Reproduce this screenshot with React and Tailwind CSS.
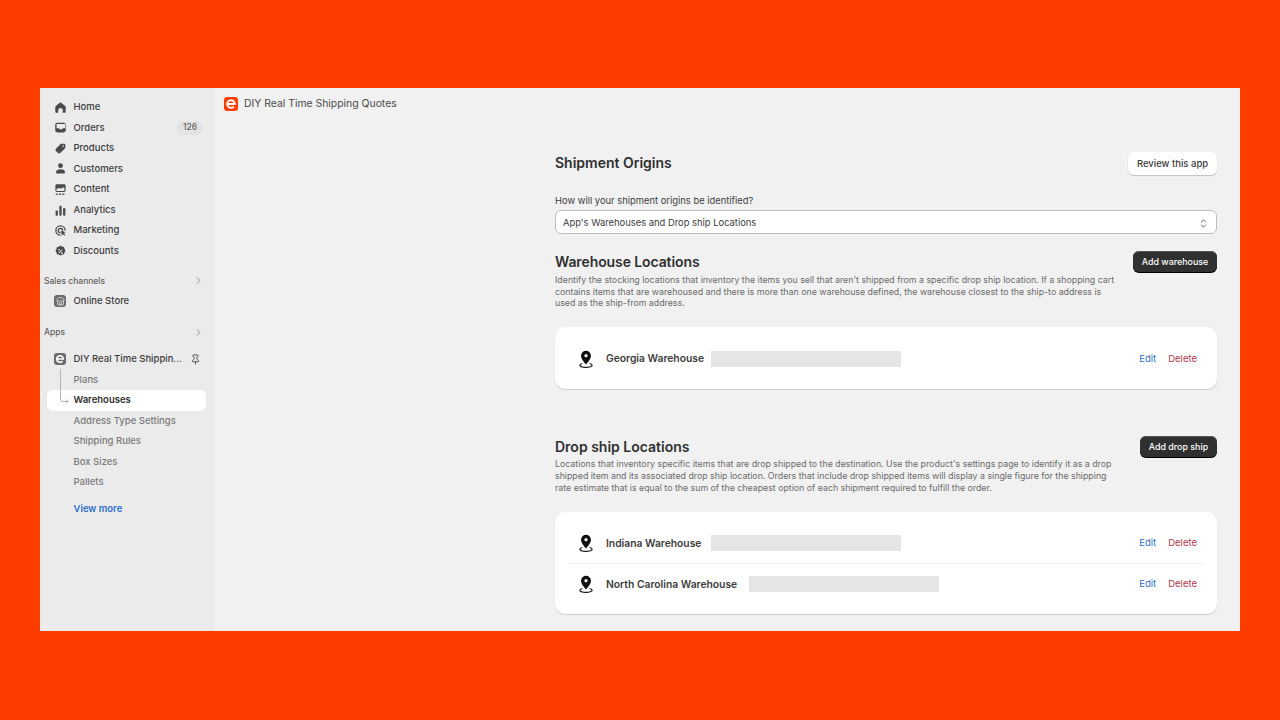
import { Store, Pin, ChevronRight, ChevronsUpDown } from "lucide-react";

const navItems = [
  { label: "Home", icon: <path d="M8 1.5 2.2 6.2c-.4.3-.6.7-.6 1.2v5.800c0 .8.6 1.300 1.300 1.300h2.300v-3.200c0-1.400 1.200-2.600 2.800-2.600s2.800 1.200 2.800 2.600v3.200h2.300c.7 0 1.300-.5 1.300-1.300V7.400c0-.5-.2-.9-.6-1.200L8 1.500Z" /> },
  { label: "Orders", badge: "126", icon: <path fillRule="evenodd" d="M4 2h8c1.4 0 2.5 1.100 2.5 2.500v7c0 1.400-1.100 2.500-2.500 2.500H4c-1.400 0-2.500-1.100-2.500-2.500v-7C1.500 3.100 2.600 2 4 2Zm-.8 1.800v5.200h2.300c.5 0 .8.2 1 .6l.3.6h3.400l.3-.6c.2-.4.5-.6 1-.6h2.300V3.800H3.200Z" /> },
  { label: "Products", icon: <path fillRule="evenodd" d="M9.500 2H13c.6 0 1 .4 1 1v3.500c0 .5-.2 1-.6 1.400l-5.700 5.700c-.8.8-2 .8-2.800 0L2.400 11.100c-.8-.8-.8-2 0-2.800L8.100 2.600C8.500 2.200 9 2 9.500 2Zm1.700 2a1 1 0 1 0 0 2 1 1 0 0 0 0-2Z" /> },
  { label: "Customers", icon: <><circle cx="8" cy="4.500" r="3" /><path d="M2.500 12.500c0-2.200 2-3.700 5.500-3.700s5.500 1.500 5.500 3.700c0 1-.7 1.500-1.500 1.500H4c-.8 0-1.500-.5-1.500-1.500Z" /></> },
  { label: "Content", icon: <><path fillRule="evenodd" d="M3.500 1.500h9c1 0 1.800.8 1.800 1.800v6c0 1-.8 1.800-1.800 1.800h-9c-1 0-1.800-.8-1.800-1.800v-6c0-1 .8-1.800 1.800-1.800Zm-.4 5.700v2.100c0 .3.2.5.4.5h9c.2 0 .4-.2.4-.5V6.600l-2-1.400-2.200 1.900-1.700-1-3.900 1.100Z" /><rect x="2" y="13" width="3" height="1.500" rx=".5" /><rect x="6" y="13" width="3" height="1.500" rx=".5" /><rect x="10" y="13" width="3" height="1.500" rx=".5" /></> },
  { label: "Analytics", icon: <><rect x="2" y="8" width="2.800" height="6.500" rx="1" /><rect x="6.600" y="2" width="2.800" height="12.500" rx="1" /><rect x="11.200" y="5" width="2.800" height="9.500" rx="1" /></> },
  { label: "Marketing", icon: <path fillRule="evenodd" d="M8 1.500a6.500 6.500 0 0 1 6.500 6.500h-1.600A4.900 4.900 0 1 0 8 12.900v1.600A6.500 6.500 0 0 1 8 1.500Zm0 3A3.500 3.500 0 0 1 11.500 8H9.900A1.900 1.900 0 1 0 8 9.900v1.600a3.500 3.500 0 0 1 0-7Zm.5 3.500 6 2-2.500 1 2 2.200-1.100 1.100-2.100-2.100-1 2.500-1.300-6.700Z" /> },
  { label: "Discounts", icon: <path fillRule="evenodd" d="M6.700 1.400a1.800 1.800 0 0 1 2.600 0l.7.7 1-.1c1 0 1.900.8 1.900 1.900l-.1 1 .7.7c.7.7.7 1.900 0 2.600l-.7.7.1 1c0 1-.8 1.900-1.900 1.900l-1-.1-.7.7c-.7.7-1.900.7-2.600 0l-.7-.7-1 .1c-1 0-1.900-.8-1.900-1.900l.1-1-.7-.7a1.800 1.800 0 0 1 0-2.600l.7-.7-.1-1c0-1 .8-1.900 1.900-1.900l1 .1.7-.7ZM9.700 5.400 5.500 9.600l.9.900 4.200-4.200-.9-.9ZM6.300 5a1 1 0 1 0 0 2 1 1 0 0 0 0-2Zm3.400 4a1 1 0 1 0 0 2 1 1 0 0 0 0-2Z" /> },
];

const subItems = ["Plans", "Warehouses", "Address Type Settings", "Shipping Rules", "Box Sizes", "Pallets"];

function NavIcon({ children }) {
  return (
    <svg viewBox="0 0 16 16" className="h-[13px] w-[13px] shrink-0 fill-[#4a4a4a]">
      {children}
    </svg>
  );
}

// the app's "e" mark, used in the sidebar and the title bar
function AppLogo({ className }) {
  return (
    <span className={`flex items-center justify-center ${className}`}>
      <svg viewBox="0 0 14 14" className="h-full w-full">
        <path d="M3.200 7h7.600A3.800 3.800 0 1 0 9.800 9.600" fill="none" stroke="#fff" strokeWidth="2" />
      </svg>
    </span>
  );
}

function LocationPin() {
  return (
    <svg viewBox="0 0 16 20" className="h-[19px] w-[16px] shrink-0">
      <path fillRule="evenodd" fill="#111" d="M8 .8a5.200 5.200 0 0 0-5.200 5.200c0 3.300 3.200 6.900 5.200 9.200 2-2.300 5.200-5.900 5.200-9.200A5.200 5.200 0 0 0 8 .8Zm0 3.500a1.700 1.700 0 1 1 0 3.400 1.700 1.700 0 0 1 0-3.400Z" />
      <path fill="none" stroke="#111" strokeWidth="1.300" d="M4.200 14.200c-1.600.4-2.600 1-2.600 1.900 0 1.200 2.900 2.200 6.400 2.200s6.400-1 6.400-2.200c0-.9-1-1.500-2.600-1.900" />
    </svg>
  );
}

function LocationRow({ name, nameWidth }) {
  return (
    <div className="flex h-[40px] items-center pr-[20px] pl-[23px]">
      <LocationPin />
      <span className={`ml-[12px] shrink-0 text-[10.300px] font-semibold text-[#3d3d3d] ${nameWidth}`}>{name}</span>
      <div className="h-[16px] w-[190px] bg-[#e5e5e5]" />
      <a className="ml-auto text-[9.500px] text-[#2c6ecb]">Edit</a>
      <a className="ml-[12px] text-[9.500px] text-[#b0384f]">Delete</a>
    </div>
  );
}

function DarkButton({ children, width }) {
  return (
    <button className={`flex h-[21px] ${width} shrink-0 items-center justify-center rounded-[6px] bg-[#303030] text-[8.900px] font-medium text-white shadow-[0_1px_0_#000,inset_0_1px_0_#555]`}>
      {children}
    </button>
  );
}

export default function App() {
  return (
    <div className="flex h-[720px] flex-col bg-[#ff3c00] px-[40px] pt-[88px] pb-[89px] font-['Inter',sans-serif]">
      <div className="flex h-[543px] overflow-hidden bg-[#f1f1f1]">
        {/* SIDEBAR */}
        <aside className="flex w-[174px] shrink-0 flex-col bg-[#ebebeb] pt-[9px] pr-[8px] pl-[7px]">
          {navItems.map((item) => (
            <div key={item.label} className="flex h-[20.560px] items-center pr-[3px] pl-[7px]">
              <NavIcon>{item.icon}</NavIcon>
              <span className="ml-[6.500px] text-[9.500px] font-medium text-[#3d3d3d]">{item.label}</span>
              {item.badge && (
                <span className="ml-auto flex h-[14px] w-[26px] items-center justify-center rounded-[7px] bg-[#e3e3e3] text-[8.500px] font-medium text-[#616161]">
                  {item.badge}
                </span>
              )}
            </div>
          ))}

          <div className="mt-[9.500px] flex h-[20px] items-center justify-between pr-[2px]">
            <span className="-ml-[3px] text-[8.500px] font-medium text-[#616161]">Sales channels</span>
            <ChevronRight size={11} className="text-[#8a8a8a]" />
          </div>
          <div className="flex h-[20.560px] items-center pl-[7px]">
            <span className="flex h-[12px] w-[12px] items-center justify-center rounded-[3px] bg-[#6b6b6b]">
              <Store size={9} className="text-[#ebebeb]" />
            </span>
            <span className="ml-[7.500px] text-[9.500px] font-medium text-[#3d3d3d]">Online Store</span>
          </div>

          <div className="mt-[11px] flex h-[20px] items-center justify-between pr-[2px]">
            <span className="-ml-[3px] text-[8.500px] font-medium text-[#616161]">Apps</span>
            <ChevronRight size={11} className="text-[#8a8a8a]" />
          </div>
          <div className="mt-[6.500px] flex h-[20.560px] items-center pr-[5px] pl-[7px]">
            <AppLogo className="h-[12px] w-[12px] rounded-[3px] bg-[#6b6b6b]" />
            <span className="ml-[7.500px] text-[9.500px] font-medium whitespace-nowrap text-[#3d3d3d]">DIY Real Time Shippin...</span>
            <Pin size={11} className="ml-auto text-[#4a4a4a]" />
          </div>

          <div className="relative">
            {/* tree connector */}
            <svg viewBox="0 0 12 36" className="absolute top-0 left-[12px] z-10 h-[36px] w-[12px]">
              <path d="M1.500 0V30q0 2.500 2.500 2.500H9M7 30.500l2 2-2 2" fill="none" stroke="#b5b5b5" />
            </svg>
            {subItems.map((label) => (
              <div
                key={label}
                className={`flex h-[20.560px] items-center rounded-[6px] pl-[26.500px] text-[9.500px] font-medium ${
                  label === "Warehouses" ? "bg-white font-semibold text-[#303030]" : "text-[#7a7a7a]"
                }`}
              >
                {label}
              </div>
            ))}
          </div>

          <div className="mt-[6.500px] flex h-[20.560px] items-center pl-[26.500px] text-[9.500px] font-semibold text-[#2c6ecb]">View more</div>
        </aside>

        {/* MAIN */}
        <main className="flex min-w-0 flex-1 flex-col">
          <header className="flex h-[31px] items-center pl-[10px]">
            <AppLogo className="h-[14px] w-[14px] rounded-[3px] bg-[#ff3c00]" />
            <span className="ml-[6px] text-[10.400px] text-[#4a4a4a]">DIY Real Time Shipping Quotes</span>
          </header>

          <div className="ml-[341px] w-[662px] pt-[33px]">
            <div className="flex h-[23px] items-center justify-between">
              <h1 className="pb-[2px] text-[14px] font-semibold text-[#303030]">Shipment Origins</h1>
              <button className="h-[23px] w-[89px] rounded-[6px] bg-white pt-[1px] text-[9.500px] font-medium text-[#3d3d3d] shadow-[0_1px_1px_rgba(0,0,0,0.2)]">
                Review this app
              </button>
            </div>

            <p className="mt-[20px] text-[9.400px] leading-[12px] text-[#3d3d3d]">How will your shipment origins be identified?</p>
            <div className="mt-[3px] flex h-[24px] items-center justify-between rounded-[6px] border border-[#bdbdbd] bg-white pt-[2px] pr-[7px] pl-[7px]">
              <span className="text-[9.400px] text-[#3d3d3d]">App's Warehouses and Drop ship Locations</span>
              <ChevronsUpDown size={11} className="text-[#616161]" />
            </div>

            <div className="mt-[17px] flex items-start justify-between">
              <div className="w-[565px]">
                <h2 className="mb-px text-[14px] leading-[22px] font-semibold tracking-[-0.1px] text-[#303030]">Warehouse Locations</h2>
                <p className="text-[8.800px] leading-[11.700px] text-[#6b6b6b]">
                  Identify the stocking locations that inventory the items you sell that aren't shipped from a specific drop ship location. If a shopping cart contains items that are warehoused and there is more than one warehouse defined, the warehouse closest to the ship-to address is used as the ship-from address.
                </p>
              </div>
              <DarkButton width="w-[84px]">Add warehouse</DarkButton>
            </div>

            <div className="mt-[18px] flex h-[62px] flex-col justify-center rounded-[10px] bg-white pt-[2px] shadow-[0_1px_1px_rgba(0,0,0,0.15)]">
              <LocationRow name="Georgia Warehouse" nameWidth="w-[105px]" />
            </div>

            <div className="mt-[47px] flex items-start justify-between">
              <div className="w-[565px]">
                <h2 className="text-[14px] leading-[22px] font-semibold text-[#303030]">Drop ship Locations</h2>
                <p className="text-[8.800px] leading-[11.700px] text-[#6b6b6b]">
                  Locations that inventory specific items that are drop shipped to the destination. Use the product's settings page to identify it as a drop shipped item and its associated drop ship location. Orders that include drop shipped items will display a single figure for the shipping rate estimate that is equal to the sum of the cheapest option of each shipment required to fulfill the order.
                </p>
              </div>
              <DarkButton width="w-[77px]">Add drop ship</DarkButton>
            </div>

            <div className="mt-[19px] flex h-[102px] flex-col justify-center rounded-[10px] bg-white pt-[1px] shadow-[0_1px_1px_rgba(0,0,0,0.15)]">
              <LocationRow name="Indiana Warehouse" nameWidth="w-[105px]" />
              <div className="mx-[13px] h-px bg-[#f1f1f1]" />
              <LocationRow name="North Carolina Warehouse" nameWidth="w-[143px]" />
            </div>
          </div>
        </main>
      </div>
    </div>
  );
}
